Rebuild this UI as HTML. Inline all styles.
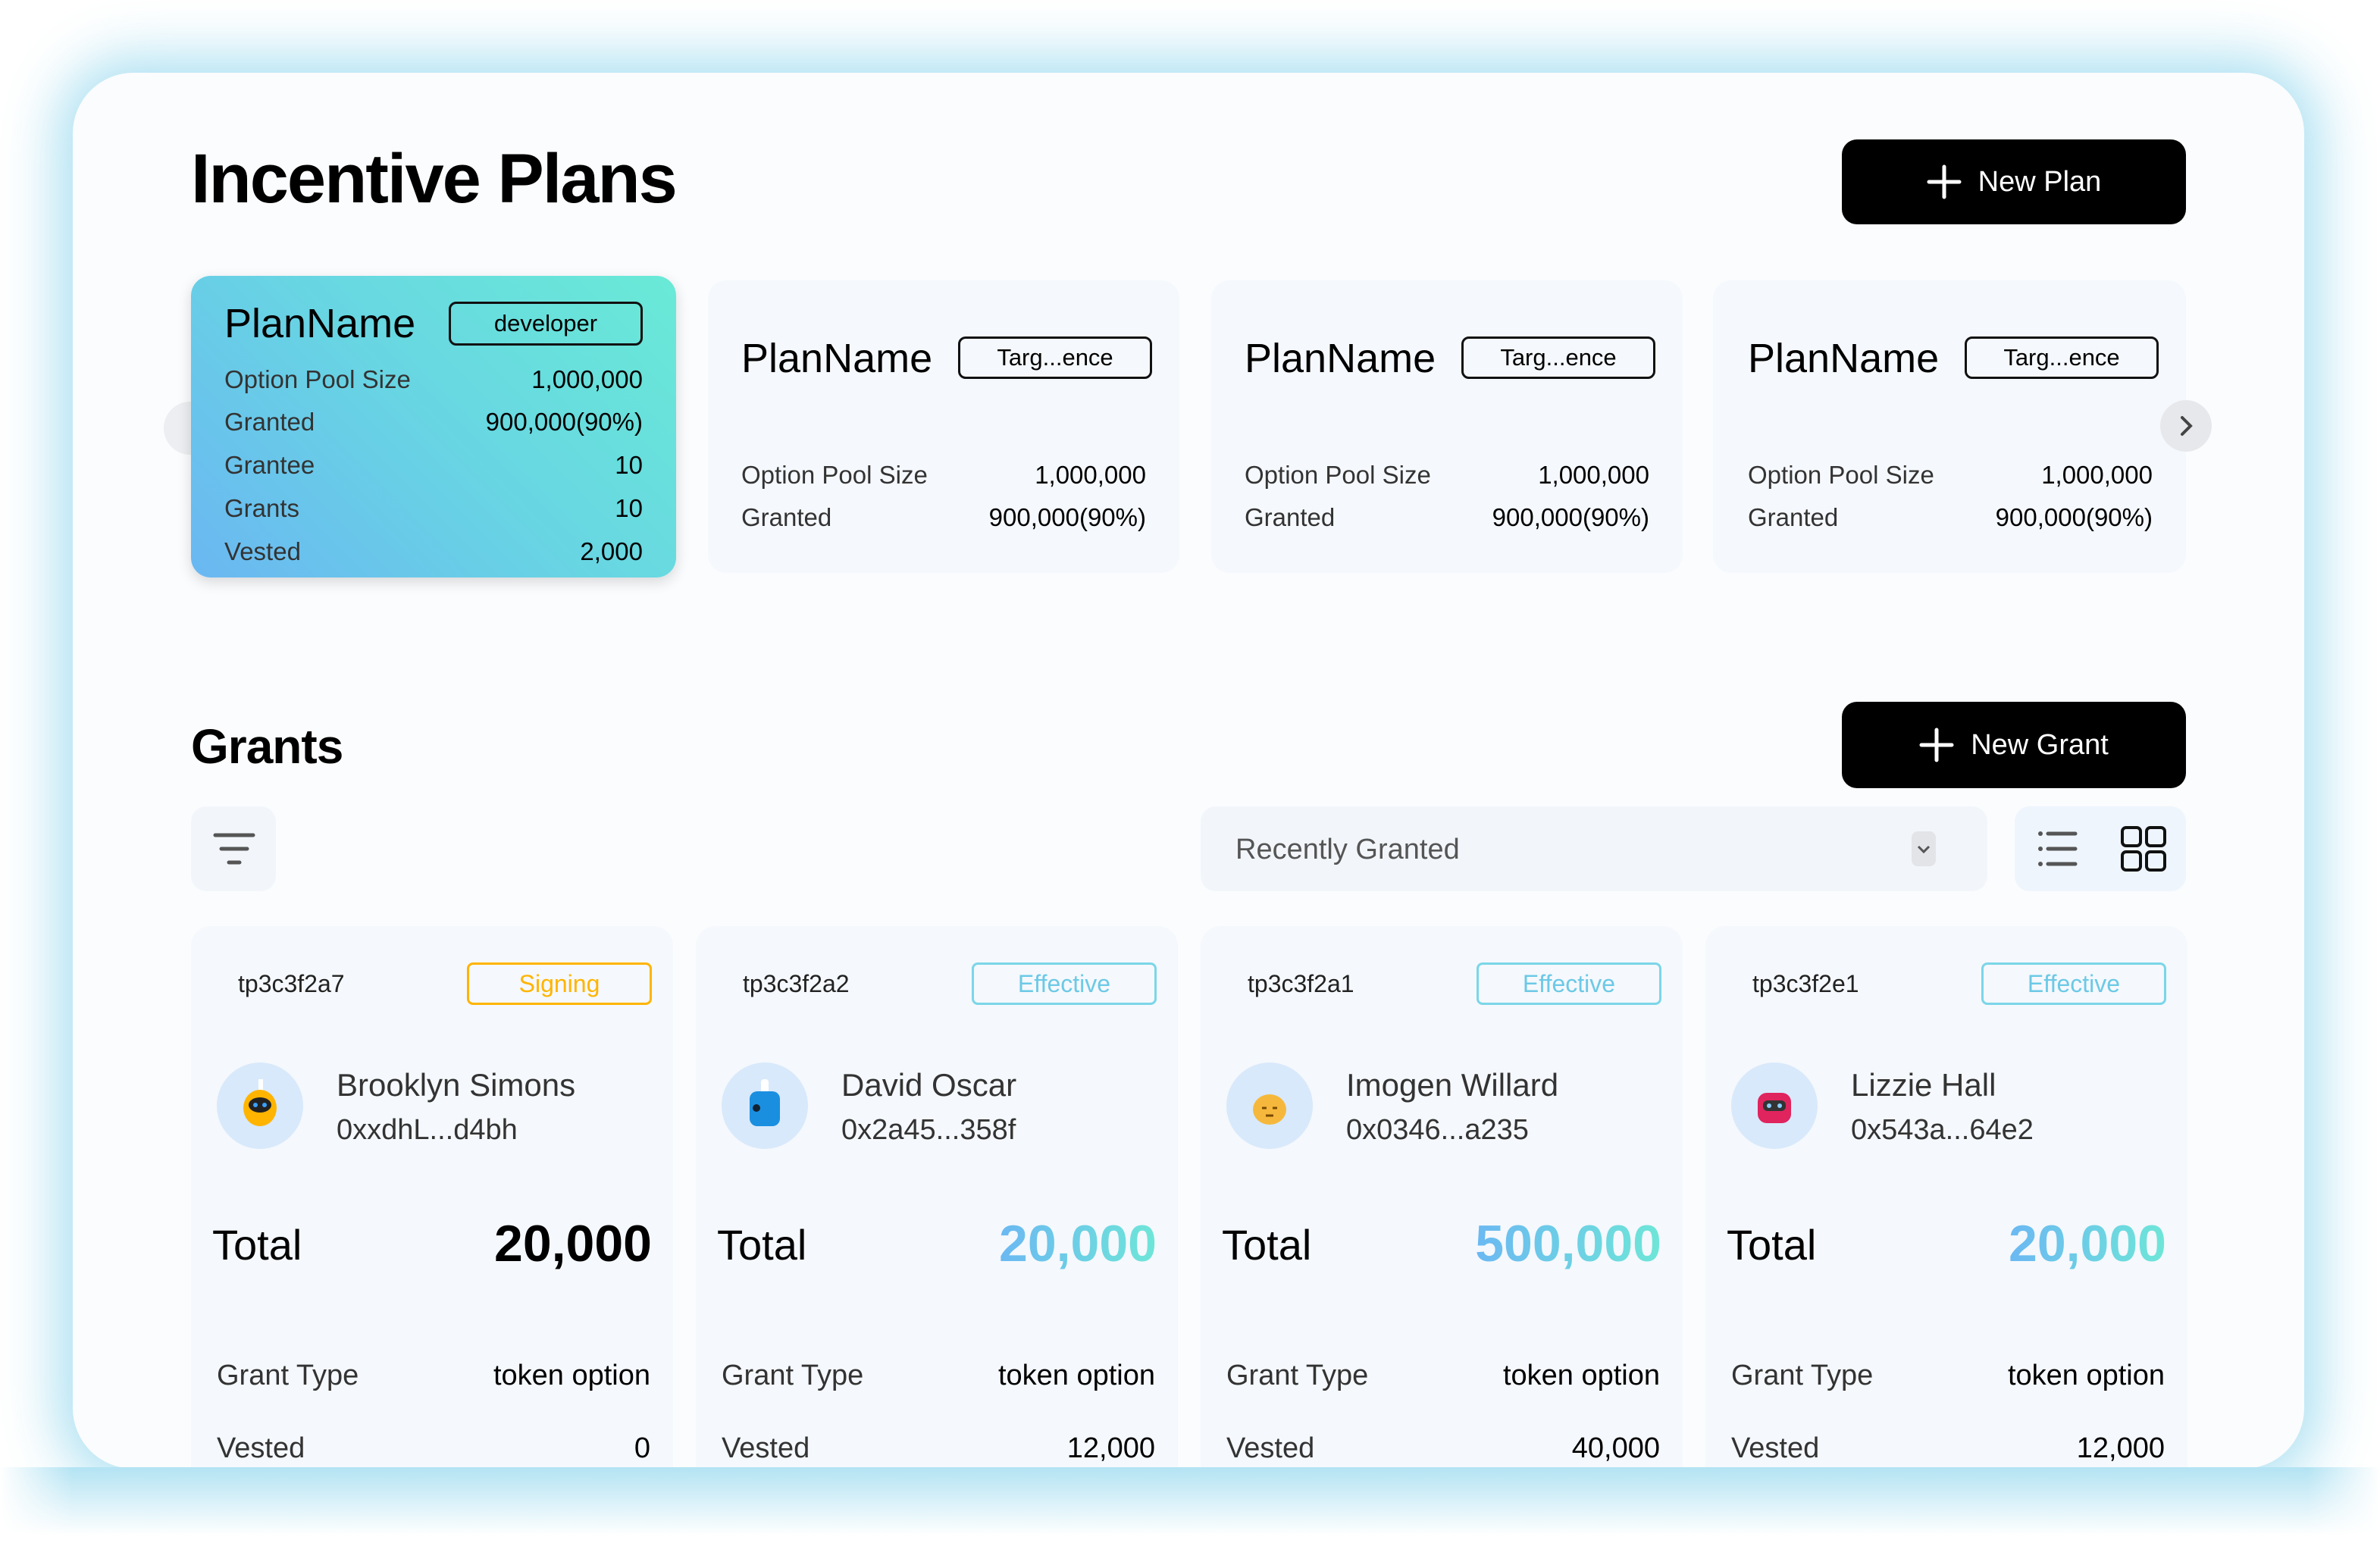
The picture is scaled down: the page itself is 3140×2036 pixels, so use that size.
<!DOCTYPE html>
<html><head><meta charset="utf-8"><style>
*{box-sizing:border-box;margin:0;padding:0}
body{width:3140px;height:2036px;background:#fff;font-family:"Liberation Sans",sans-serif;position:relative;overflow:hidden}
.panel{position:absolute;left:96px;top:96px;width:2944px;height:1842px;background:#fbfcfe;border-radius:80px;box-shadow:0 0 70px 22px rgba(160,220,240,.85);overflow:hidden}
.a{position:absolute}
.btn{position:absolute;background:#000;color:#fff;border-radius:20px;font-size:38px;display:flex;align-items:center;justify-content:center;gap:22px}
.card{position:absolute;background:#f5f8fc;border-radius:24px}
.row{position:absolute;display:flex;justify-content:space-between;font-size:33px;color:#333}
.row b{font-weight:normal;color:#000}
.tag{position:absolute;border:3px solid #111;border-radius:10px;font-size:31px;text-align:center}
.g{position:absolute;top:1222px;width:636px;height:760px;background:#f5f8fc;border-radius:26px}
.g .id{position:absolute;left:62px;top:58px;font-size:32px;color:#222}
.g .st{position:absolute;left:364px;top:48px;width:244px;height:56px;border-radius:8px;font-size:32px;text-align:center;line-height:50px}
.eff{border:3px solid #7bd6e8;color:#6cc9e6}
.g .av{position:absolute;left:34px;top:180px;width:114px;height:114px;border-radius:50%;background:#d8e9fb}
.g .nm{position:absolute;left:192px;top:186px;font-size:42px;color:#333}
.g .ad{position:absolute;left:192px;top:248px;font-size:38px;color:#333}
.g .tl{position:absolute;left:28px;top:388px;font-size:56px;color:#000}
.g .tv{position:absolute;right:28px;top:380px;font-size:68px;font-weight:bold}
.gr{background:linear-gradient(90deg,#6bb8f2,#6ee6d8);-webkit-background-clip:text;background-clip:text;color:transparent}
.g .r1,.g .r2{position:absolute;left:34px;right:30px;display:flex;justify-content:space-between;font-size:38px;color:#333}
.g .r1{top:572px}.g .r2{top:668px}
.g b{font-weight:normal;color:#000}
</style></head><body>
<div class="panel" style="left:96px;top:96px">
</div>
<div class="a" style="left:252px;top:184px;font-size:92px;font-weight:bold;letter-spacing:-2px">Incentive Plans</div>
<div class="btn" style="left:2430px;top:184px;width:454px;height:112px"><svg width="46" height="46"><path d="M23 3v40M3 23h40" stroke="#fff" stroke-width="5" stroke-linecap="round"/></svg>New Plan</div>

<div class="a" style="left:216px;top:530px;width:70px;height:70px;border-radius:50%;background:#eceef1"></div>
<div class="card" style="left:252px;top:364px;width:640px;height:398px;border-radius:26px;background:linear-gradient(225deg,#69ead6 0%,#68d5e3 50%,#6ab7f2 100%);box-shadow:0 6px 18px rgba(0,0,0,.15)">
 <div class="a" style="left:44px;top:32px;font-size:54px">PlanName</div>
 <div class="tag" style="left:340px;top:34px;width:256px;height:58px;line-height:52px">developer</div>
 <div class="row" style="left:44px;right:44px;top:118px"><span>Option Pool Size</span><b>1,000,000</b></div>
 <div class="row" style="left:44px;right:44px;top:174px"><span>Granted</span><b>900,000(90%)</b></div>
 <div class="row" style="left:44px;right:44px;top:231px"><span>Grantee</span><b>10</b></div>
 <div class="row" style="left:44px;right:44px;top:288px"><span>Grants</span><b>10</b></div>
 <div class="row" style="left:44px;right:44px;top:345px"><span>Vested</span><b>2,000</b></div>
</div>

<div class="card" style="left:934px;top:370px;width:622px;height:386px">
 <div class="a" style="left:44px;top:72px;font-size:54px">PlanName</div>
 <div class="tag" style="left:330px;top:74px;width:256px;height:56px;line-height:50px">Targ...ence</div>
 <div class="row" style="left:44px;right:44px;top:238px"><span>Option Pool Size</span><b>1,000,000</b></div>
 <div class="row" style="left:44px;right:44px;top:294px"><span>Granted</span><b>900,000(90%)</b></div>
</div>
<div class="card" style="left:1598px;top:370px;width:622px;height:386px">
 <div class="a" style="left:44px;top:72px;font-size:54px">PlanName</div>
 <div class="tag" style="left:330px;top:74px;width:256px;height:56px;line-height:50px">Targ...ence</div>
 <div class="row" style="left:44px;right:44px;top:238px"><span>Option Pool Size</span><b>1,000,000</b></div>
 <div class="row" style="left:44px;right:44px;top:294px"><span>Granted</span><b>900,000(90%)</b></div>
</div>
<div class="card" style="left:2260px;top:370px;width:624px;height:386px">
 <div class="a" style="left:46px;top:72px;font-size:54px">PlanName</div>
 <div class="tag" style="left:332px;top:74px;width:256px;height:56px;line-height:50px">Targ...ence</div>
 <div class="row" style="left:46px;right:44px;top:238px"><span>Option Pool Size</span><b>1,000,000</b></div>
 <div class="row" style="left:46px;right:44px;top:294px"><span>Granted</span><b>900,000(90%)</b></div>
</div>
<div class="a" style="left:2850px;top:528px;width:68px;height:68px;border-radius:50%;background:#e6e8eb"><svg width="68" height="68"><path d="M29 23l11 11-11 11" stroke="#444" stroke-width="4" fill="none" stroke-linecap="round"/></svg></div>

<div class="a" style="left:252px;top:948px;font-size:64px;font-weight:bold;letter-spacing:-1px">Grants</div>
<div class="btn" style="left:2430px;top:926px;width:454px;height:114px"><svg width="46" height="46"><path d="M23 3v40M3 23h40" stroke="#fff" stroke-width="5" stroke-linecap="round"/></svg>New Grant</div>

<div class="a" style="left:252px;top:1064px;width:112px;height:112px;background:#f2f6fb;border-radius:20px"><svg width="112" height="112"><path d="M32 38h50M40 56h34M50 74h14" stroke="#555" stroke-width="5" stroke-linecap="round"/></svg></div>
<div class="a" style="left:1584px;top:1064px;width:1038px;height:112px;background:#f2f6fb;border-radius:20px">
 <div class="a" style="left:46px;top:36px;font-size:38px;color:#555">Recently Granted</div>
 <div class="a" style="left:938px;top:33px;width:32px;height:46px;background:#e2e4e8;border-radius:8px"><svg width="32" height="46"><path d="M9 20l7 7 7-7" stroke="#555" stroke-width="3" fill="none"/></svg></div>
</div>
<div class="a" style="left:2658px;top:1064px;width:226px;height:112px;background:#eef5fd;border-radius:20px">
 <svg class="a" style="left:28px;top:26px" width="60" height="60"><g fill="#555"><circle cx="6" cy="10" r="3"/><circle cx="6" cy="30" r="3"/><circle cx="6" cy="50" r="3"/></g><path d="M16 10h36M16 30h36M16 50h36" stroke="#555" stroke-width="5" stroke-linecap="round"/></svg>
 <svg class="a" style="left:138px;top:24px" width="64" height="64"><g fill="none" stroke="#111" stroke-width="4"><rect x="4" y="4" width="24" height="24" rx="5"/><rect x="36" y="4" width="24" height="24" rx="5"/><rect x="4" y="36" width="24" height="24" rx="5"/><rect x="36" y="36" width="24" height="24" rx="5"/></g></svg>
</div>

<div class="g" style="left:252px">
 <div class="id">tp3c3f2a7</div><div class="st" style="border:3px solid #ffb400;color:#ffb400">Signing</div>
 <div class="av"><svg width="114" height="114"><rect x="55" y="22" width="6" height="16" fill="#fff"/><ellipse cx="57" cy="60" rx="22" ry="24" fill="#ffb400"/><ellipse cx="57" cy="56" rx="15" ry="10" fill="#222"/><circle cx="51" cy="56" r="3" fill="#3aa0ff"/><circle cx="63" cy="56" r="3" fill="#3aa0ff"/></svg></div>
 <div class="nm">Brooklyn Simons</div><div class="ad">0xxdhL...d4bh</div>
 <div class="tl">Total</div><div class="tv">20,000</div>
 <div class="r1"><span>Grant Type</span><b>token option</b></div>
 <div class="r2"><span>Vested</span><b>0</b></div>
</div>
<div class="g" style="left:918px">
 <div class="id">tp3c3f2a2</div><div class="st eff">Effective</div>
 <div class="av"><svg width="114" height="114"><rect x="52" y="22" width="10" height="18" rx="4" fill="#fff"/><rect x="37" y="38" width="40" height="46" rx="10" fill="#1a8fe0"/><circle cx="46" cy="60" r="5" fill="#123"/></svg></div>
 <div class="nm">David Oscar</div><div class="ad">0x2a45...358f</div>
 <div class="tl">Total</div><div class="tv gr">20,000</div>
 <div class="r1"><span>Grant Type</span><b>token option</b></div>
 <div class="r2"><span>Vested</span><b>12,000</b></div>
</div>
<div class="g" style="left:1584px">
 <div class="id">tp3c3f2a1</div><div class="st eff">Effective</div>
 <div class="av"><svg width="114" height="114"><ellipse cx="57" cy="62" rx="22" ry="20" fill="#f6b83c"/><path d="M47 60h6M61 60h6M52 70h10" stroke="#7a4a00" stroke-width="3"/></svg></div>
 <div class="nm">Imogen Willard</div><div class="ad">0x0346...a235</div>
 <div class="tl">Total</div><div class="tv gr">500,000</div>
 <div class="r1"><span>Grant Type</span><b>token option</b></div>
 <div class="r2"><span>Vested</span><b>40,000</b></div>
</div>
<div class="g" style="left:2250px">
 <div class="id">tp3c3f2e1</div><div class="st eff">Effective</div>
 <div class="av"><svg width="114" height="114"><rect x="35" y="40" width="44" height="40" rx="12" fill="#e0245e"/><rect x="42" y="50" width="30" height="14" rx="6" fill="#333"/><circle cx="50" cy="57" r="3" fill="#8cf"/><circle cx="64" cy="57" r="3" fill="#8cf"/></svg></div>
 <div class="nm">Lizzie Hall</div><div class="ad">0x543a...64e2</div>
 <div class="tl">Total</div><div class="tv gr">20,000</div>
 <div class="r1"><span>Grant Type</span><b>token option</b></div>
 <div class="r2"><span>Vested</span><b>12,000</b></div>
</div>
<div class="a" style="left:0;top:1936px;width:3140px;height:100px;background:linear-gradient(#b3e3f3,#fff 90%)"></div>
<div class="a" style="left:0;top:1936px;width:3140px;height:100px;background:linear-gradient(90deg,#fff 0,rgba(255,255,255,0) 96px,rgba(255,255,255,0) 3044px,#fff 3140px)"></div>
</body></html>
